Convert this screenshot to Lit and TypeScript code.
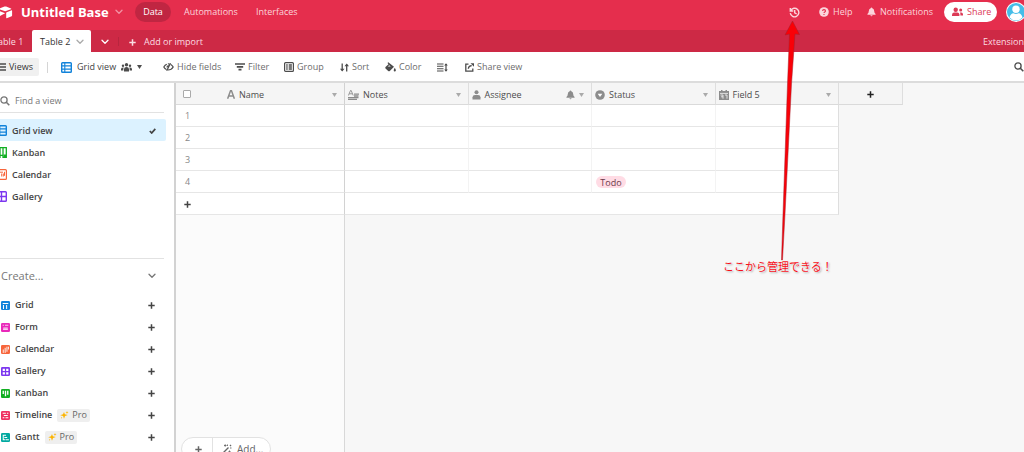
import { LitElement, html, css, svg, nothing, TemplateResult } from "lit";
import { customElement, state } from "lit/decorators.js";

type Glyph = { box: string; w: number; h: number; body: TemplateResult };
const g = (w: number, h: number, body: TemplateResult, box = `0 0 ${w} ${h}`): Glyph => ({ box, w, h, body });

const ICONS: Record<string, Glyph> = {
  logo: g(13, 13, svg`<path d="M0 2.2 4.5.6Q5.3.3 6.1.6L11 2.4q.7.4 0 .8L6 5.1q-.8.2-1.6 0L0 3.6z"/><path d="M6.3 6.4 11.6 4.3q.5-.1.5.4v4.9q0 .4-.4.6L6.7 12.2q-.5.1-.5-.4V6.9q0-.4.1-.5z"/><path d="M0 5.2 4.6 7q.5.3 0 .6L0 10z"/>`),
  chevron: g(8, 6, svg`<path d="M1 1.2 4 4.3 7 1.2" fill="none" stroke="currentColor" stroke-width="1.3" stroke-linecap="round" stroke-linejoin="round"/>`),
  caret: g(5, 4, svg`<path d="M0 0h5L2.5 4z"/>`),
  plus: g(7, 7, svg`<path d="M3.5.3v6.4M.3 3.5h6.4" stroke="currentColor" stroke-width="1.5"/>`),
  history: g(11, 11, svg`<path d="M1.7 3.600A4.300 4.300 0 1 1 1.300 6.200M1.300 1v3h3M5.700 3v2.900l2 1.100" fill="none" stroke="currentColor" stroke-width="1.400"/>`),
  help: g(10, 10, svg`<circle cx="5" cy="5" r="4.8"/><path d="M3.5 3.9C3.6 2.2 6.5 2.2 6.5 4 6.5 5 5 5 5 6M5 6.9v1.1" fill="none" stroke="#e52e4d" stroke-width="1.1"/>`),
  bell: g(9, 10, svg`<path d="M5 0q.8 0 .9.9Q8 1.5 8 4q0 2.3 1.5 3.3V8H.5v-.7Q2 6.3 2 4 2 1.500 4.100.9 4.200 0 5 0zM3.800 8.500h2.400Q6 9.700 5 9.700T3.800 8.500z"/>`, "0 0 10 10"),
  share: g(11, 10, svg`<circle cx="3.700" cy="2.700" r="2.200"/><path d="M0 9V7.500Q.3 5.500 2.200 5.500h3Q7.200 5.500 7.400 7.500V9z"/><circle cx="8.700" cy="3" r="1.500"/><path d="M8 5.600h1.300Q10.800 5.800 11 7.300V8.500H8.400V7.200Q8.300 6.200 8 5.600z"/>`),
  avatar: g(20, 20, svg`<circle cx="10" cy="10" r="10" fill="#fff"/><circle cx="10" cy="10" r="9" fill="#45bde8"/><circle cx="10" cy="7.300" r="3.700" fill="#fff"/><path d="M3.500 15.500Q4.500 11.500 7.500 11.300q2.500 1.500 5 0 3 .2 4 4.200Q13.800 18.500 10 18.500T3.500 15.500z" fill="#fff"/>`),
  menu: g(6, 8, svg`<path d="M0 1h6M0 4h6M0 7h6" stroke="currentColor" stroke-width="1.400"/>`),
  grid: g(11, 11, svg`<rect x=".7" y=".7" width="9.600" height="9.600" rx=".8" fill="none" stroke="currentColor" stroke-width="1.400"/><path d="M3.800 1v9M1 3.900h9M1 7.100h9" stroke="currentColor" stroke-width="1.100"/>`),
  people: g(11, 9, svg`<circle cx="5.500" cy="1.800" r="1.700"/><path d="M3 8.500V6Q3.200 4 5.500 4T8 6v2.500z"/><circle cx="2" cy="2.800" r="1.200"/><circle cx="9" cy="2.800" r="1.200"/><path d="M0 7.500V6Q.2 4.500 2.700 4.600 2.200 5.500 2.300 7.500zM11 7.500V6q-.2-1.500-2.700-1.400.5.9.4 2.900z"/>`),
  hide: g(11, 8, svg`<path d="M3.800 1.300Q2 2 .8 4q1 1.800 2.600 2.500M5 7Q8.500 7 10.200 4 9.300 2.300 7.800 1.500M6.300.9Q5.500.8 4.900 1M7.500.2 3.700 7.800M5.700 2.800Q4.200 2.600 3.900 4.400" fill="none" stroke="currentColor" stroke-width="1.200"/>`),
  filter: g(10, 8, svg`<path d="M0 1h10M1.800 3.800h6.400M3.500 6.600h3" stroke="currentColor" stroke-width="1.700"/>`),
  group: g(10, 10, svg`<rect x=".6" y=".6" width="8.800" height="8.800" rx="1" fill="none" stroke="currentColor" stroke-width="1.200"/><path d="M2.200 3h1.500M4.700 3h3.200M2.200 5h1.500M4.700 5h3.200M2.200 7h1.500M4.700 7h3.200" stroke="currentColor" stroke-width="1.300"/>`),
  sort: g(9, 9, svg`<path d="M2.200.5v7M6.700 8.500v-7" stroke="currentColor" stroke-width="1.300"/><path d="M0 5.700h4.500L2.200 8.600zM4.500 3.300H9L6.700.4z"/>`),
  color: g(11, 10, svg`<path d="M3.300.3 9 4.800 4.800 9Q4 9.600 3.200 9L.5 6.400Q0 5.800.5 5.100L3.500 2.300 2.500 1zM9.800 5.700Q11 7.600 10.900 8.500q-.3 1-1.200.9-.9-.1-1-1Q8.700 7.500 9.800 5.700z"/><path d="M2.700 4.600 4.200 3.200 5.800 4.600z" fill="#fff"/>`),
  height: g(11, 9, svg`<path d="M0 1h6.500M0 3.300h6.500M0 5.700h6.500M0 8h6.500" stroke="currentColor" stroke-width="1.100"/><path d="M9 1v7" stroke="currentColor" stroke-width="1.200"/><path d="M7.200 2.500h3.600L9 .2zM7.200 6.500h3.600L9 8.800z"/>`),
  external: g(9, 9, svg`<path d="M3.500 1.200H.8v7h7V5.600M3.300 5.800Q3.500 2.800 6.700 2.600" fill="none" stroke="currentColor" stroke-width="1.300"/><path d="M5.500.2H9v3.600z"/>`),
  search: g(10, 10, svg`<circle cx="4" cy="4" r="3.100" fill="none" stroke="currentColor" stroke-width="1.300"/><path d="m6.300 6.300 3 3" stroke="currentColor" stroke-width="1.600"/>`),
  check: g(7, 6, svg`<path d="m.8 3 1.900 2L6.300.9" fill="none" stroke="currentColor" stroke-width="1.700"/>`),
  kanbanView: g(11, 11, svg`<path d="M.7.700h9.600v9.600H7V8.300H4v2H.7zM4 1v8M7 1v8" fill="none" stroke="currentColor" stroke-width="1.300"/><path d="M7.500 7.500h2.500v2.500H7.500z"/>`),
  calendarView: g(11, 11, svg`<rect x=".6" y=".6" width="9.800" height="9.800" rx="1" fill="none" stroke="currentColor" stroke-width="1.200"/><path d="M2 3.200h5M8.500 2.800v4M3.500 4.500v4M5.700 4.500v3M7.300 4.500v3" stroke="currentColor" stroke-width="1"/>`),
  galleryView: g(11, 11, svg`<rect x=".7" y=".7" width="9.600" height="9.600" rx=".8" fill="none" stroke="currentColor" stroke-width="1.400"/><path d="M5.500 1v9M1 5.500h9" stroke="currentColor" stroke-width="1.400"/>`),
  cGrid: g(9, 9, svg`<rect width="8" height="8" rx="1.200"/><path d="M1.500 2.200h5M2.200 3.500V7M5 3.500V7" stroke="#fff" stroke-width=".9"/>`, "0 0 8 8"),
  cForm: g(9, 9, svg`<rect width="8" height="8" rx="1.200"/><path d="M1.500 2h1M3.500 2h3M1.800 5.500h4.400" stroke="#fff" stroke-width=".7"/><path d="M2 3.700h4v2.500H2z" fill="#fff" opacity=".5"/>`, "0 0 8 8"),
  cCalendar: g(9, 9, svg`<rect width="8" height="8" rx="1.200"/><path d="M2 4v3M3.700 2.500v4.500M5.300 1.500V6M6.600 1.500V4" stroke="#fff" stroke-width=".8"/>`, "0 0 8 8"),
  cGallery: g(9, 9, svg`<rect width="8" height="8" rx="1.200"/><path d="M1.500 1.500h2v2h-2zM4.600 1.500h2v2h-2zM1.500 4.600h2v2h-2zM4.600 4.600h2v2h-2z" fill="#fff"/>`, "0 0 8 8"),
  cKanban: g(9, 9, svg`<rect width="8" height="8" rx="1.200"/><path d="M2 1.500v3M4 1.500v5M6 1.500V5" stroke="#fff" stroke-width="1.200"/>`, "0 0 8 8"),
  cTimeline: g(9, 9, svg`<rect width="8" height="8" rx="1.200"/><path d="M1.500 2h2.800M5.300 2h1.200M2.500 4h3.500M1.500 6h1.500M4 6h2.500" stroke="#fff" stroke-width="1"/>`, "0 0 8 8"),
  cGantt: g(9, 9, svg`<rect width="8" height="8" rx="1.200"/><path d="M1.500 2h3M3 4h2.500M4 6h3M2 2v4h1.500" fill="none" stroke="#fff" stroke-width=".9"/>`, "0 0 8 8"),
  spark: g(9, 8, svg`<path d="M4 1 4.800 3.300 7.800 4 5 5 4 7.800 3.100 5 .2 4.200 3 3.300zM7 0l.4 1 1.200.3-1.200.5L7 3l-.5-1.200-1-.4L6.600 1zM1 6.300l1.200.2-.6 1.200z"/>`),
  text: g(8, 9, svg`<path d="M.6 8.700 3.600.6h.8L7.400 8.700M1.800 5.900h4.400" fill="none" stroke="currentColor" stroke-width="1.500"/>`),
  long: g(11, 10, svg`<path d="M.4 5.500 2.500.5h.7L5.200 5.500M1.300 3.800h3" fill="none" stroke="currentColor" stroke-width=".9"/><path d="M6 4.200h5M6 6h4.500M0 7.600h10.500M0 9.300h9" stroke="currentColor" stroke-width="1.300"/>`),
  person: g(9, 10, svg`<circle cx="4.500" cy="2.200" r="2"/><path d="M.5 9.500V7.300Q.7 5 3 5h3q2.300 0 2.500 2.300v2.200z"/>`),
  select: g(10, 10, svg`<circle cx="5" cy="5" r="4.800"/><path d="M2.700 3.800h4.600L5 7z" fill="#fff"/>`),
  date: g(10, 10, svg`<path d="M0 1h2V0h1.500v1h3V0H8v1h2v9H0z"/><path d="M1 3.400h8M1.500 5H4v3.700M2 6.800h2M6 5h2v3.700" fill="none" stroke="#f5f5f5" stroke-width=".8"/>`),
  wand: g(10, 10, svg`<path d="M.5 9.500 6.500 3.500M8 2l1-1" stroke="currentColor" stroke-width="1.400"/><path d="M2 1.500h2.500M3.200.3v2.400M7.500 6.500v3M6 8h3M5.500.5v1.500M9.500 4H8" stroke="currentColor" stroke-width=".9"/>`),
};

const icon = (name: string) => {
  const i = ICONS[name];
  return html`<svg class="icon" viewBox=${i.box} width=${i.w} height=${i.h} fill="currentColor" aria-hidden="true">${i.body}</svg>`;
};

const VIEWS = [
  ["Grid view", "grid", "blue"],
  ["Kanban", "kanbanView", "green"],
  ["Calendar", "calendarView", "orange"],
  ["Gallery", "galleryView", "purple"],
];

const CREATE = [
  ["Grid", "cGrid", "blue"],
  ["Form", "cForm", "pink"],
  ["Calendar", "cCalendar", "orange"],
  ["Gallery", "cGallery", "purple"],
  ["Kanban", "cKanban", "green"],
  ["Timeline", "cTimeline", "red", "Pro"],
  ["Gantt", "cGantt", "teal", "Pro"],
];

const TOOLS = [
  ["Hide fields", "hide"],
  ["Filter", "filter"],
  ["Group", "group"],
  ["Sort", "sort"],
  ["Color", "color"],
  ["", "height"],
  ["Share view", "external"],
];

const FIELDS = [
  ["Notes", "long"],
  ["Assignee", "person"],
  ["Status", "select"],
  ["Field 5", "date"],
];

@customElement("app-root")
export class AppRoot extends LitElement {
  @state() private active = "Grid view";

  static styles = css`
    :host {
      display: flex;
      flex-direction: column;
      position: relative;
      height: 100vh;
      overflow: hidden;
      font: 10px/14px "Open Sans", "Noto Sans", "Noto Sans CJK JP", sans-serif;
      color: #555;
      background: #f7f7f7;
    }
    * { box-sizing: border-box; }
    button, input { font: inherit; color: inherit; border: 0; margin: 0; padding: 0; background: none; }
    button { display: flex; align-items: center; white-space: nowrap; text-align: left; }
    a { color: inherit; text-decoration: none; }
    .icon { display: block; flex: none; }
    .grow { flex: 1; }

    .top { display: flex; align-items: center; height: 30px; padding-bottom: 6px; background: #e52e4d; color: #fbd5dc; }
    .top .logo { color: #fff; }
    .base { margin-left: 8px; gap: 6px; width: 114px; }
    .base h1 { margin: 0; font-size: 13px; line-height: 18px; font-weight: 700; color: #fff; }
    .base .icon { opacity: .6; }
    .nav { display: grid; grid-template-columns: 36px 72px 50px; align-items: center; }
    .nav a { font-size: 9px; }
    .nav .on { height: 20px; line-height: 20px; border-radius: 10px; text-align: center; background: #c02642; color: #fff; }
    .nav .next { padding-left: 13px; }
    .actions { display: grid; grid-template-columns: 30px 48px 77px 62px 20px; align-items: center; margin-right: -2px; }
    .actions button { gap: 4px; font-size: 9px; }
    .actions .share { height: 20px; width: 53px; padding: 0 8px; border-radius: 10px; background: #fff; color: #dc3a56; }

    .tabs { display: flex; align-items: center; height: 22px; background: #cd2945; color: #fbdde2; font-size: 9px; }
    .tabs button { height: 22px; padding-top: 2px; }
    .first { margin-left: -7px; width: 39px; }
    .tabs .current { gap: 6px; width: 59px; padding-left: 8px; border-radius: 2px 2px 0 0; background: #fff; color: #333; }
    .current .icon { color: #aaa; }
    .more { width: 27px; justify-content: center; color: #fff; }
    .split { width: 1px; height: 9px; background: #b8253e; }
    .tabs .import { gap: 8px; padding-left: 10px; }

    .tools { display: flex; align-items: center; height: 31px; padding-top: 1px; background: #fff; border-bottom: 2px solid #dcdcdc; font-size: 9px; color: #6c6c6c; }
    .tools button { gap: 3px; }
    .tools .icon { color: #4c4c4c; }
    .views { width: 39px; height: 18px; border-radius: 0 2px 2px 0; background: #f0f0f0; color: #333; }
    .rule { width: 1px; height: 11px; margin: 0 13px 0 8px; background: #d5d5d5; }
    .tools .viewname { gap: 5px; width: 102px; color: #444; }
    .tools .blue .icon { color: #1283da; }
    .set { display: grid; grid-template-columns: 72px 49px 56px 45px 52px 28px auto; }

    .main { flex: 1; min-height: 0; display: grid; grid-template-columns: 176px minmax(0, 1fr); }
    .side { display: flex; flex-direction: column; background: #fff; border-right: 2px solid #d2d2d2; color: #444; }
    .find { display: flex; align-items: center; gap: 5px; height: 30px; padding-top: 6px; margin-right: 10px; border-bottom: 1px solid #e2e2e2; color: #777; font-size: 9px; }
    .find input { width: 120px; outline: 0; }
    .find input::placeholder { color: #777; opacity: 1; }
    .list { display: flex; flex-direction: column; margin: 6px 8px 0 0; height: 139px; font-size: 9px; font-weight: 600; }
    .list button { height: 22px; gap: 5px; padding: 1px 10px 0 0; border-radius: 0 2px 2px 0; }
    .list .on { background: #dcf2ff; }
    .list .shape { width: 7px; display: flex; justify-content: flex-end; overflow: hidden; }
    .create { margin-right: 10px; border-top: 1px solid #e2e2e2; padding-top: 7px; font-size: 9px; }
    .create .head { width: 100%; height: 20px; padding: 0 8px 0 1px; margin-bottom: 8px; font-size: 11px; color: #777; }
    .create .item { width: 100%; height: 22px; gap: 5px; padding: 0 9px 0 1px; font-weight: 600; }
    .create .item b { font-weight: 600; }
    .pro { display: flex; align-items: center; gap: 3px; height: 13px; padding: 0 3px; border-radius: 2px; background: #efefef; font-weight: 400; color: #666; }
    .pro .icon { color: #fcb400; }
    .blue { color: #1283da; } .green { color: #11af22; } .orange { color: #f7653b; } .purple { color: #7c37ef; }
    .pink { color: #e929ba; } .red { color: #ef3061; } .teal { color: #01a9a0; }

    .sheet { display: flex; flex-direction: column; }
    .band { display: grid; grid-template-columns: 169px 1fr; flex: 1; }
    .left { display: flex; align-items: flex-end; background: #fbfbfb; border-right: 1px solid #d8d8d8; }
    .adder { display: flex; height: 24px; margin: 0 0 -9px 5px; width: 90px; border: 1px solid #e2e2e2; border-radius: 12px; background: #fff; color: #666; font-size: 10px; }
    .adder button { gap: 5px; padding-left: 9px; }
    .adder button:first-child { width: 31px; padding-left: 13px; border-right: 1px solid #e2e2e2; }
    table { border-collapse: separate; border-spacing: 0; table-layout: fixed; width: 727px; font-size: 9px; }
    th, td { height: 22px; padding: 1px 0 0; border-bottom: 1px solid #e6e6e6; text-align: left; font-weight: 400; vertical-align: middle; background: #fff; }
    th { background: #f5f5f5; border-color: #dadada; border-right: 1px solid #dedede; }
    td { border-right: 1px solid #f3f3f3; }
    .num { width: 23px; text-align: center; color: #888; border-right: 0; }
    .num input { display: block; appearance: none; width: 8px; height: 8px; margin: 0 0 0 7px; border: 1px solid #aaa; border-radius: 1px; background: #fff; }
    .num .icon { margin-left: 8px; color: #444; }
    .name { width: 146px; border-right: 1px solid #d2d2d2; }
    .cellhead { display: flex; align-items: center; gap: 4px; padding: 1px 7px 0 3px; color: #4c4c4c; }
    .cellhead .icon { color: #8c8c8c; }
    .cellhead .icon:last-child { color: #aaa; }
    .name .cellhead { padding-left: 28px; }
    .plus { width: 64px; color: #222; }
    .plus button { width: 100%; height: 20px; justify-content: center; }
    .void { background: transparent; border: 0; }
    .end { border-right: 1px solid #dedede; }
    .flat { border-right: 0; }
    .tag { display: block; width: 30px; height: 12px; margin-left: 4px; line-height: 13px; border-radius: 6px; text-align: center; background: #ffdce5; color: #6b3a4a; }

    .arrow { position: absolute; left: 720px; top: 0; pointer-events: none; }
    .note { position: absolute; left: 723px; top: 258px; margin: 0; font: 400 11px/16px "Noto Sans CJK JP", sans-serif; color: #f5101a; white-space: nowrap; text-shadow: 0 0 2px #fff, 0 0 1px #fff, 1px 1px 2px #999; }
  `;

  private row(n: number) {
    return html`<tr>
      <td class="num">${n}</td><td class="name"></td><td></td><td></td>
      <td>${n === 4 ? html`<span class="tag">Todo</span>` : nothing}</td>
      <td class="end"></td><td class="void"></td>
    </tr>`;
  }

  render() {
    return html`
      <header class="top">
        <span class="logo">${icon("logo")}</span>
        <button class="base"><h1>Untitled Base</h1>${icon("chevron")}</button>
        <nav class="nav">
          <a class="on" href="#data">Data</a>
          <a class="next" href="#automations">Automations</a>
          <a class="next" href="#interfaces">Interfaces</a>
        </nav>
        <span class="grow"></span>
        <div class="actions">
          <button aria-label="History">${icon("history")}</button>
          <button>${icon("help")}Help</button>
          <button>${icon("bell")}Notifications</button>
          <button class="share">${icon("share")}Share</button>
          <button aria-label="Account">${icon("avatar")}</button>
        </div>
      </header>
      <div class="tabs">
        <button class="first">Table 1</button>
        <button class="current">Table 2 ${icon("chevron")}</button>
        <button class="more" aria-label="All tables">${icon("chevron")}</button>
        <span class="split"></span>
        <button class="import">${icon("plus")}Add or import</button>
        <span class="grow"></span>
        <button>Extension</button>
      </div>
      <div class="tools">
        <button class="views">${icon("menu")}Views</button>
        <span class="rule"></span>
        <button class="viewname"><span class="blue">${icon("grid")}</span>Grid view ${icon("people")} ${icon("caret")}</button>
        <div class="set">
          ${TOOLS.map(([label, name]) => html`<button aria-label=${label || "Row height"}>${icon(name)}${label}</button>`)}
        </div>
        <span class="grow"></span>
        <button aria-label="Search">${icon("search")}</button>
      </div>
      <div class="main">
        <aside class="side">
          <label class="find">${icon("search")}<input type="text" aria-label="Find a view" placeholder="Find a view" /></label>
          <div class="list">
            ${VIEWS.map(([label, name, tone]) => html`
              <button class=${label === this.active ? "on" : ""} @click=${() => (this.active = label)}>
                <span class="shape ${tone}">${icon(name)}</span>${label}
                <span class="grow"></span>${label === this.active ? icon("check") : nothing}
              </button>`)}
          </div>
          <section class="create">
            <button class="head">Create...<span class="grow"></span>${icon("chevron")}</button>
            ${CREATE.map(([label, name, tone, tier]) => html`
              <button class="item">
                <span class=${tone}>${icon(name)}</span><b>${label}</b>
                ${tier ? html`<span class="pro">${icon("spark")}${tier}</span>` : nothing}
                <span class="grow"></span>${icon("plus")}
              </button>`)}
          </section>
        </aside>
        <section class="sheet">
          <table>
            <thead><tr>
              <th class="num"><input type="checkbox" aria-label="Select all rows" /></th>
              <th class="name"><div class="cellhead">${icon("text")}Name<span class="grow"></span>${icon("caret")}</div></th>
              ${FIELDS.map(([label, name]) => html`
                <th><div class="cellhead">${icon(name)}${label}<span class="grow"></span>${label === "Assignee" ? icon("bell") : nothing}${icon("caret")}</div></th>`)}
              <th class="plus"><button aria-label="Add field">${icon("plus")}</button></th>
            </tr></thead>
            <tbody>
              ${[1, 2, 3, 4].map((n) => this.row(n))}
              <tr>
                <td class="num">${icon("plus")}</td><td class="name"></td>
                <td class="flat"></td><td class="flat"></td><td class="flat"></td><td class="end"></td><td class="void"></td>
              </tr>
            </tbody>
          </table>
          <div class="band">
            <div class="left">
              <div class="adder"><button aria-label="Add record">${icon("plus")}</button><button>${icon("wand")}Add...</button></div>
            </div>
          </div>
        </section>
      </div>
      <svg class="arrow" width="100" height="270" viewBox="720 0 100 270" aria-hidden="true">
        <path d="M792.500 21 799.500 34.500 795 34 791.500 84 785 214 782.500 260H781.500L783 214 787.500 84 789.500 34 785 35z" fill="#fa0007" stroke="#a3202c" stroke-width=".5"/>
      </svg>
      <p class="note">ここから管理できる！</p>
    `;
  }
}
